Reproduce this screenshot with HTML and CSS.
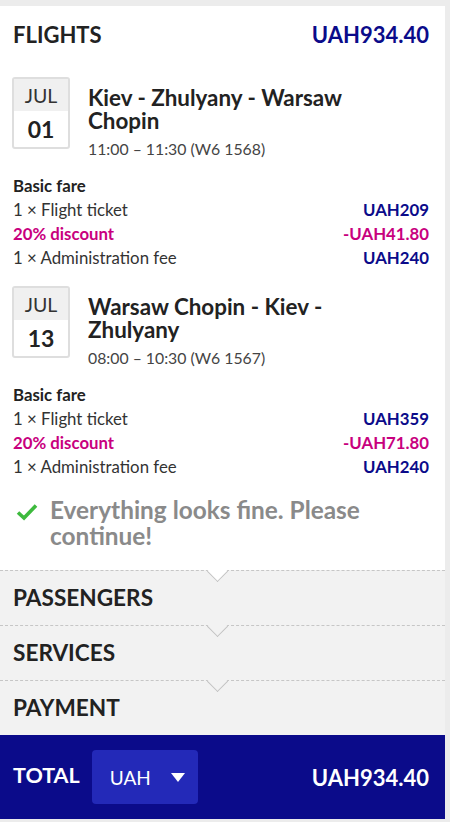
FILE: index.html
```html
<!DOCTYPE html>
<html>
<head>
<meta charset="utf-8">
<link rel="stylesheet" href="styles.css">
</head>
<body>
<div class="panel">
  <div class="summary">
    <div class="head">
      <h2 class="head-title">FLIGHTS</h2>
      <span class="head-price">UAH934.40</span>
    </div>

    <div class="flight">
      <div class="date">
        <div class="date-month">JUL</div>
        <div class="date-day">01</div>
      </div>
      <div class="flight-info">
        <div class="route">Kiev - Zhulyany - Warsaw Chopin</div>
        <div class="time">11:00 – 11:30 (W6 1568)</div>
      </div>
    </div>
    <div class="fare">
      <div class="fare-title">Basic fare</div>
      <div class="fare-row"><span>1 × Flight ticket</span><span class="amount">UAH209</span></div>
      <div class="fare-row discount"><span>20% discount</span><span class="amount">-UAH41.80</span></div>
      <div class="fare-row"><span>1 × Administration fee</span><span class="amount">UAH240</span></div>
    </div>

    <div class="flight">
      <div class="date">
        <div class="date-month">JUL</div>
        <div class="date-day">13</div>
      </div>
      <div class="flight-info">
        <div class="route">Warsaw Chopin - Kiev - Zhulyany</div>
        <div class="time">08:00 – 10:30 (W6 1567)</div>
      </div>
    </div>
    <div class="fare">
      <div class="fare-title">Basic fare</div>
      <div class="fare-row"><span>1 × Flight ticket</span><span class="amount">UAH359</span></div>
      <div class="fare-row discount"><span>20% discount</span><span class="amount">-UAH71.80</span></div>
      <div class="fare-row"><span>1 × Administration fee</span><span class="amount">UAH240</span></div>
    </div>

    <div class="status">
      <svg class="status-icon" width="22" height="18" viewBox="0 0 22 18"><path d="M2 9.5 L8 15 L20 2.5" fill="none" stroke="#3dba3d" stroke-width="3.6" stroke-linecap="butt" stroke-linejoin="miter"/></svg>
      <p class="status-text">Everything looks fine. Please continue!</p>
    </div>
  </div>

  <div class="step step-first">PASSENGERS</div>
  <div class="step">SERVICES</div>
  <div class="step">PAYMENT</div>

  <div class="total">
    <span class="total-label">TOTAL</span>
    <div class="currency">
      <span>UAH</span>
      <svg class="currency-caret" width="14" height="9" viewBox="0 0 14 9"><path d="M0 0 H14 L7 9 Z" fill="#fff"/></svg>
    </div>
    <span class="total-price">UAH934.40</span>
  </div>
</div>
</body>
</html>
```
FILE: styles.css
```css
* { box-sizing: border-box; }
html, body { margin: 0; padding: 0; }
body {
  background: #ececec;
  font-family: Lato, "Noto Sans", sans-serif;
  color: #222;
  padding-top: 6px;
}
.panel {
  width: 445px;
  background: #fff;
}
.summary {
  padding: 15px 16px 21px 13px;
}
.head {
  display: flex;
  justify-content: space-between;
  align-items: center;
  line-height: 28px;
}
.head-title {
  margin: 0;
  font-size: 22px;
  font-weight: 700;
  color: #222;
}
.head-price {
  font-size: 22px;
  font-weight: 700;
  color: #0b0b8a;
}
.flight {
  display: flex;
  align-items: flex-start;
  margin-top: 28px;
}
.fare + .flight { margin-top: 16px; }
.date {
  width: 58px;
  height: 72px;
  border: 2px solid #dedede;
  border-radius: 3px;
  margin-left: -1px;
  flex: none;
  display: flex;
  flex-direction: column;
  text-align: center;
}
.date-month {
  background: #f0f0f0;
  height: 32px;
  line-height: 33px;
  font-size: 19.5px;
  color: #333;
}
.date-day {
  flex: 1;
  line-height: 37px;
  font-size: 23px;
  font-weight: 700;
  color: #222;
}
.flight-info {
  margin-left: 18px;
  padding-top: 9px;
  width: 300px;
}
.route {
  font-size: 22.4px;
  font-weight: 700;
  line-height: 23px;
  color: #222;
}
.time {
  margin-top: 6px;
  font-size: 15.8px;
  line-height: 22px;
  color: #444;
}
.fare {
  margin-top: 14px;
  font-size: 16.8px;
  line-height: 24px;
}
.fare-title { font-weight: 700; color: #222; }
.fare-row {
  display: flex;
  justify-content: space-between;
  color: #333;
}
.amount { font-weight: 700; color: #0b0b8a; }
.discount, .discount .amount { color: #c8007e; font-weight: 700; }
.status {
  display: flex;
  align-items: flex-start;
  margin-top: 18px;
}
.status-icon {
  flex: none;
  margin: 6px 12px 0 3px;
}
.status-text {
  margin: 0;
  font-size: 24.4px;
  font-weight: 700;
  line-height: 26px;
  color: #8a8a8a;
}
.step {
  position: relative;
  background: #f2f2f2;
  border-top: 1px dashed #c6c6c6;
  padding: 13px 13px;
  font-size: 22.6px;
  line-height: 28px;
  font-weight: 700;
  color: #222;
}
.step::before {
  content: "";
  position: absolute;
  left: 210px;
  top: -7px;
  width: 14px;
  height: 14px;
  background: #f2f2f2;
  border-right: 1px solid #c2c2c2;
  border-bottom: 1px solid #c2c2c2;
  transform: rotate(45deg);
}
.step-first::before { background: #fff; }
.total {
  display: flex;
  align-items: center;
  height: 84px;
  background: #0b0b8a;
  color: #fff;
  padding: 0 16px 0 13px;
}
.total-label {
  font-size: 21.5px;
  font-weight: 700;
  margin-top: -4px;
}
.currency {
  margin-left: 12px;
  width: 106px;
  height: 54px;
  border-radius: 4px;
  background: #2329b8;
  display: flex;
  align-items: center;
  padding-left: 18px;
  font-size: 19px;
}
.currency-caret { margin-left: 20px; }
.total-price {
  margin-left: auto;
  font-size: 22px;
  font-weight: 700;
}
```
